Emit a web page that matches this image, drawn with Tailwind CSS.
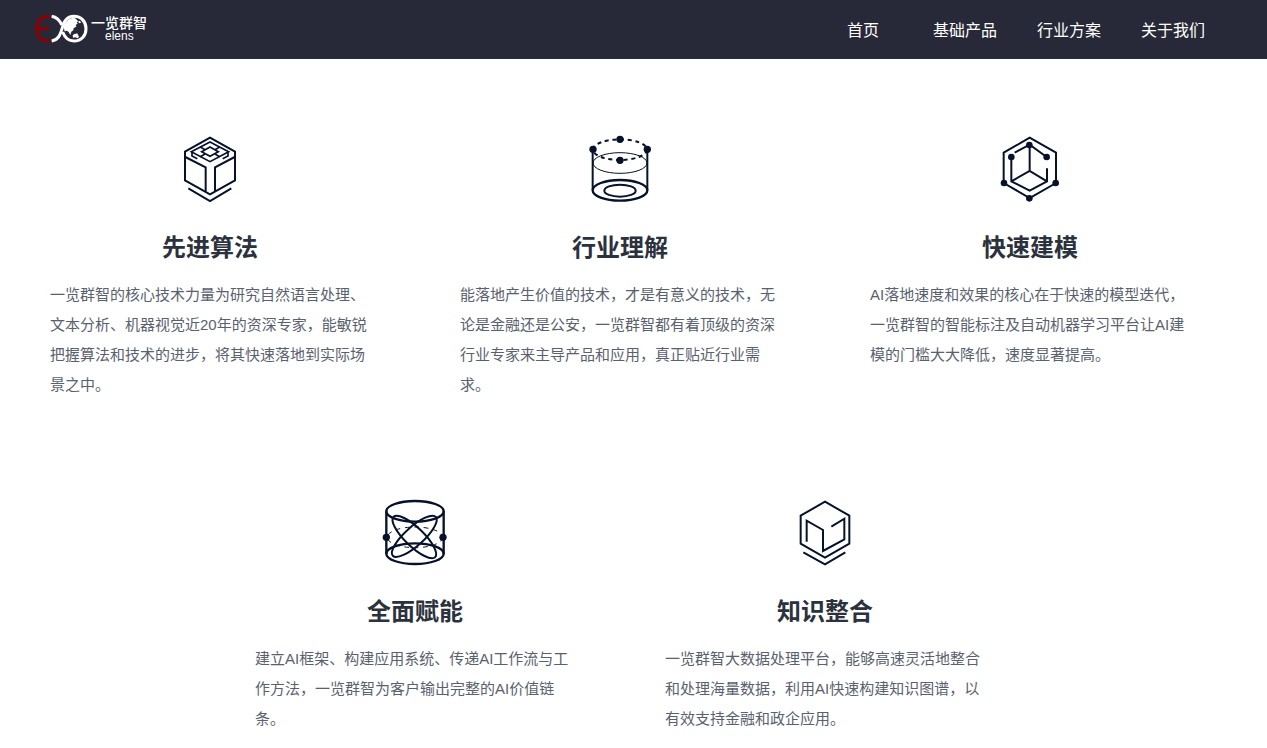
<!DOCTYPE html>
<html lang="zh-CN">
<head>
  <meta charset="UTF-8">
  <meta name="viewport" content="width=device-width,initial-scale=1">
  <title>一览群智</title>
  <script src="https://cdn.jsdelivr.net/npm/@tailwindcss/browser@4"></script>
</head>
<body class="bg-white font-['Liberation_Sans','Noto_Sans_CJK_SC',sans-serif]">

<!-- header -->
<header class="flex items-center justify-between h-[59px] pl-[35px] pr-[62px] bg-[#272838] text-white">
  <a href="#" class="flex items-center gap-[3px] pb-[2px]">
    <svg class="w-[53px] h-[30px]" viewBox="0 -3 159 90" fill="none">
      <g stroke="#8e0000" stroke-width="9">
        <path d="M46 5C20 3 6 18 6 41s14 39 40 37"/>
        <path d="M8 41h35"/>
      </g>
      <g stroke="#fff" stroke-width="9">
        <path d="M50 4c17 3 25 14 30 26"/>
        <path d="M50 78c22-4 27-22 32-40C87 16 99 4 117 4c22 0 36 16 36 37s-14 37-36 37c-18 0-28-11-34-27"/>
      </g>
      <path fill="#fff" d="M119 8c-16 0-29 11-33 29l3 12 7-2 5 4 5 9 3-10 6-4 1-7 8-4-2-5 6-4-3-4 5-3-4-4z"/>
      <path fill="#fff" d="M113 61l6-5 4 1 3-3 3 5 3 6-4 5-7-3-7 1zM133 17l6 5-5 3-5-4z"/>
    </svg>
    <span class="flex flex-col">
      <span class="text-[14px] leading-[14px] font-medium">一览群智</span>
      <span class="pl-[14px] text-[12px] leading-[12px]">elens</span>
    </span>
  </a>
  <nav class="flex gap-[40px] pt-[2px] text-base">
    <a href="#" class="min-w-[60px] text-center">首页</a>
    <a href="#" class="min-w-[60px] text-center">基础产品</a>
    <a href="#" class="min-w-[60px] text-center">行业方案</a>
    <a href="#" class="min-w-[60px] text-center">关于我们</a>
  </nav>
</header>

<!-- features -->
<main class="pt-[66px] pr-[27px]">
  <ul class="flex flex-wrap justify-center gap-x-[90px] gap-y-[89px]">
    <li class="w-[320px]">
      <svg class="mx-auto w-[80px] h-[85px]" viewBox="0 0 240 255" fill="none" stroke="#06122b" stroke-width="6">
        <path d="M120 38l75 42v86l-75 42-75-42V80z"/>
        <path d="M46 96l61 31v73M194 96l-59 31v73M55 190l65 38 64-38"/>
        <path d="M120 51l56 29-56 30-56-30z" stroke-width="5"/>
        <path d="M120 66l25 14-25 14-25-14z" stroke-width="5"/>
        <path d="M91 66l14 8M149 66l-14 8M91 95l14-8M149 95l-14-8M66 81v12l16 8M174 81v12l-16 8" stroke-width="5"/>
      </svg>
      <h2 class="mt-[20px] text-center text-2xl leading-[36px] font-bold text-[#2b323d]">先进算法</h2>
      <p class="mt-[14px] text-[15px] leading-[30px] text-[#5a616e]">一览群智的核心技术力量为研究自然语言处理、文本分析、机器视觉近20年的资深专家，能敏锐把握算法和技术的进步，将其快速落地到实际场景之中。</p>
    </li>
    <li class="w-[320px]">
      <svg class="mx-auto w-[80px] h-[85px]" viewBox="0 0 240 255" fill="none" stroke="#06122b" stroke-width="6">
        <ellipse cx="120" cy="74" rx="81" ry="31" stroke-width="6" stroke-dasharray="12 11"/>
        <ellipse cx="120" cy="114" rx="81" ry="31" stroke-width="3"/>
        <ellipse cx="120" cy="196" rx="82" ry="31" stroke-width="7"/>
        <ellipse cx="120" cy="197" rx="47" ry="18"/>
        <path stroke-width="6" d="M38 74v122M202 74v122"/>
        <g fill="#06122b" stroke="none">
          <circle cx="120" cy="43" r="11"/>
          <circle cx="120" cy="106" r="11"/>
          <circle cx="39" cy="73" r="11"/>
          <circle cx="202" cy="73" r="11"/>
        </g>
      </svg>
      <h2 class="mt-[20px] text-center text-2xl leading-[36px] font-bold text-[#2b323d]">行业理解</h2>
      <p class="mt-[14px] text-[15px] leading-[30px] text-[#5a616e]">能落地产生价值的技术，才是有意义的技术，无论是金融还是公安，一览群智都有着顶级的资深行业专家来主导产品和应用，真正贴近行业需求。</p>
    </li>
    <li class="w-[320px]">
      <svg class="mx-auto w-[80px] h-[85px]" viewBox="0 0 240 255" fill="none" stroke="#06122b" stroke-width="6">
        <path d="M119 38l79 45v91l-79 45-78-45V83z"/>
        <path d="M64 96v73l55 28 52-28v-39M64 169l55-31 52 31M119 138V59M74 83l45-24 51 37"/>
        <g fill="#06122b" stroke="none">
          <circle cx="118" cy="60" r="10"/>
          <circle cx="64" cy="96" r="10"/>
          <circle cx="170" cy="96" r="10"/>
          <circle cx="42" cy="174" r="10"/>
          <circle cx="197" cy="174" r="10"/>
          <circle cx="118" cy="220" r="10"/>
        </g>
      </svg>
      <h2 class="mt-[20px] text-center text-2xl leading-[36px] font-bold text-[#2b323d]">快速建模</h2>
      <p class="mt-[14px] text-[15px] leading-[30px] text-[#5a616e]">AI落地速度和效果的核心在于快速的模型迭代，一览群智的智能标注及自动机器学习平台让AI建模的门槛大大降低，速度显著提高。</p>
    </li>
    <li class="w-[320px]">
      <svg class="mx-auto w-[80px] h-[85px]" viewBox="0 -3 240 255" fill="none" stroke="#06122b" stroke-width="7">
        <ellipse cx="120" cy="64" rx="86" ry="31"/>
        <ellipse cx="120" cy="191" rx="86" ry="31"/>
        <path d="M34 64v128M206 64v128"/>
        <ellipse cx="120" cy="142" rx="83" ry="31" stroke-width="3" stroke-dasharray="14 14"/>
        <ellipse cx="118" cy="141" rx="87" ry="28" stroke-width="6" transform="rotate(44 118 141)"/>
        <ellipse cx="118" cy="139" rx="87" ry="28" stroke-width="6" transform="rotate(-42 118 139)"/>
        <g fill="#06122b" stroke="none">
          <circle cx="34" cy="142" r="11"/>
          <circle cx="204" cy="142" r="11"/>
        </g>
      </svg>
      <h2 class="mt-[20px] text-center text-2xl leading-[36px] font-bold text-[#2b323d]">全面赋能</h2>
      <p class="mt-[14px] text-[15px] leading-[30px] text-[#5a616e]">建立AI框架、构建应用系统、传递AI工作流与工作方法，一览群智为客户输出完整的AI价值链条。</p>
    </li>
    <li class="w-[320px]">
      <svg class="mx-auto w-[80px] h-[85px]" viewBox="0 -3 240 255" fill="none" stroke="#06122b" stroke-width="6">
        <path d="M120 35l73 42v84l-73 42-73-42V77z"/>
        <path d="M55 187l65 36 61-36"/>
        <path d="M65 155V92l49 28v63l64-35V86l-39 24"/>
      </svg>
      <h2 class="mt-[20px] text-center text-2xl leading-[36px] font-bold text-[#2b323d]">知识整合</h2>
      <p class="mt-[14px] text-[15px] leading-[30px] text-[#5a616e]">一览群智大数据处理平台，能够高速灵活地整合和处理海量数据，利用AI快速构建知识图谱，以有效支持金融和政企应用。</p>
    </li>
  </ul>
</main>

</body>
</html>
